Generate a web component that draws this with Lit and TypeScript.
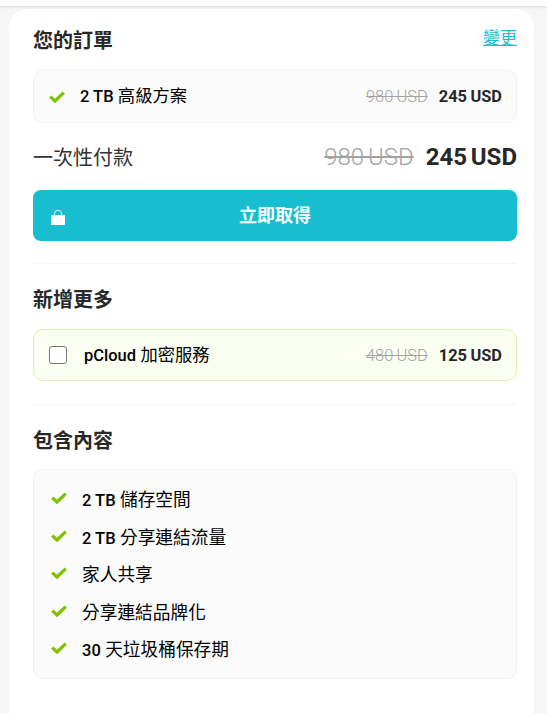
import { LitElement, html, css, svg } from "lit";
import { customElement } from "lit/decorators.js";

const check = (cls: string) => html`<svg class=${cls} viewBox="0 0 16 12" aria-hidden="true">
  <path d="M1.2 5.6 L6 10 L14.8 1.6" fill="none" stroke="#7fc300" stroke-width="3.3" stroke-linejoin="miter"/>
</svg>`;

const lock = svg`<path d="M3.4 7V5a3.6 3.6 0 0 1 7.2 0V7" fill="none" stroke="#fff" stroke-opacity=".7" stroke-width="1.3"/><path d="M0 6.8a.8.8 0 0 1 .8-.8h12.4a.8.8 0 0 1 .8.8v8.4a.8.8 0 0 1-.8.8H.8a.8.8 0 0 1-.8-.8z" fill="#fff"/>`;

@customElement("app-root")
export class AppRoot extends LitElement {
  static styles = css`
    :host {
      display: block;
      height: 714px;
      overflow: hidden;
      background: #f6f6f6;
      font-family: Roboto, "Noto Sans CJK TC", sans-serif;
      color: #282828;
    }
    .topbar {
      height: 6px;
      background: #fff;
      box-shadow: 0 1px 3px rgba(0, 0, 0, 0.12);
    }
    .card {
      margin: 3px 13px 0 9px;
      height: 705px;
      box-sizing: border-box;
      background: #fff;
      border-radius: 18px 18px 0 0;
      padding: 17px 17px 0 24px;
    }
    .head {
      display: flex;
      justify-content: space-between;
      align-items: flex-start;
      height: 28px;
    }
    h2 {
      margin: 0;
      font-size: 20px;
      line-height: 30px;
      font-weight: 700;
      color: #282828;
    }
    .change {
      margin-top: -1px;
      font-size: 17px;
      line-height: 26px;
      font-weight: 400;
      color: #17bed0;
      text-decoration: underline;
    }
    .box {
      box-sizing: border-box;
      display: flex;
      align-items: center;
      height: 53px;
      margin-top: 16px;
      padding: 0 14px 0 15px;
      background: #fbfbfb;
      border: 1px solid #f1f1f1;
      border-radius: 10px;
    }
    .name {
      font-size: 17.3px;
      font-weight: 400;
      color: #000;
      flex: 1;
      margin-bottom: 4px;
    }
    .name b {
      font-weight: 500;
      font-size: 16.5px;
    }
    .old {
      font-size: 16.4px;
      font-weight: 300;
      color: #a3a3a3;
      text-decoration: line-through;
      margin-right: 11px;
      word-spacing: -0.7px;
    }
    .new {
      font-size: 16.4px;
      font-weight: 700;
      color: #282828;
      word-spacing: -0.6px;
    }
    .chk-s {
      width: 16px;
      height: 12px;
      margin-right: 15px;
      flex: none;
    }
    .total {
      display: flex;
      justify-content: space-between;
      align-items: center;
      height: 31px;
      margin-top: 18px;
    }
    .total .label {
      font-size: 20px;
      font-weight: 400;
      color: #333;
    }
    .total .old {
      font-size: 24px;
      margin: 0 12px 0 0;
      word-spacing: -2px;
    }
    .total .new {
      font-size: 24px;
      word-spacing: -2.2px;
    }
    .buy {
      position: relative;
      display: flex;
      align-items: center;
      justify-content: center;
      box-sizing: border-box;
      height: 51px;
      padding-bottom: 4px;
      margin-top: 18px;
      background: #17bed0;
      border-radius: 8px;
      color: #fff;
      font-size: 18px;
      font-weight: 700;
    }
    .buy svg {
      position: absolute;
      left: 18px;
      top: 19px;
      width: 14px;
      height: 16px;
    }
    hr {
      border: 0;
      border-top: 1px solid #f4f4f4;
      margin: 22px 0 0;
    }
    .addon + hr {
      margin-top: 23px;
    }
    .sec-title {
      margin-top: 21px;
    }
    .addon {
      margin-top: 14px;
      background: #fbfff2;
      border-color: #e0efb0;
      height: 52px;
    }
    .cb {
      box-sizing: border-box;
      width: 18px;
      height: 18px;
      margin-right: 17px;
      flex: none;
      border: 1px solid #767676;
      border-radius: 3px;
      background: #fff;
    }
    .incl {
      box-sizing: border-box;
      margin-top: 13px;
      height: 210px;
      padding: 9.5px 16px 0 17px;
      background: #fbfbfb;
      border: 1px solid #f1f1f1;
      border-radius: 10px;
      list-style: none;
      margin-bottom: 0;
    }
    .incl li {
      display: flex;
      align-items: center;
      height: 37.5px;
      font-size: 17.7px;
      color: #000;
    }
    .incl b {
      font-weight: 500;
      font-size: 16.5px;
    }
    .incl svg {
      width: 16px;
      height: 12px;
      margin-right: 15px;
      flex: none;
    }
  `;

  render() {
    return html`
      <div class="topbar"></div>
      <div class="card">
        <div class="head">
          <h2>您的訂單</h2>
          <a class="change">變更</a>
        </div>
        <div class="box">
          ${check("chk-s")}
          <span class="name"><b>2 TB</b> 高級方案</span>
          <span class="old">980 USD</span>
          <span class="new">245 USD</span>
        </div>
        <div class="total">
          <span class="label">一次性付款</span>
          <span><span class="old">980 USD</span><span class="new">245 USD</span></span>
        </div>
        <div class="buy">
          <svg viewBox="0 0 14 16" aria-hidden="true">${lock}</svg>
          立即取得
        </div>
        <hr />
        <h2 class="sec-title">新增更多</h2>
        <div class="box addon">
          <span class="cb"></span>
          <span class="name"><b>pCloud</b> 加密服務</span>
          <span class="old">480 USD</span>
          <span class="new">125 USD</span>
        </div>
        <hr />
        <h2 class="sec-title">包含內容</h2>
        <ul class="incl">
          <li>${check("")}<span><b>2 TB</b> 儲存空間</span></li>
          <li>${check("")}<span><b>2 TB</b> 分享連結流量</span></li>
          <li>${check("")}<span>家人共享</span></li>
          <li>${check("")}<span>分享連結品牌化</span></li>
          <li>${check("")}<span><b>30</b> 天垃圾桶保存期</span></li>
        </ul>
      </div>
    `;
  }
}
